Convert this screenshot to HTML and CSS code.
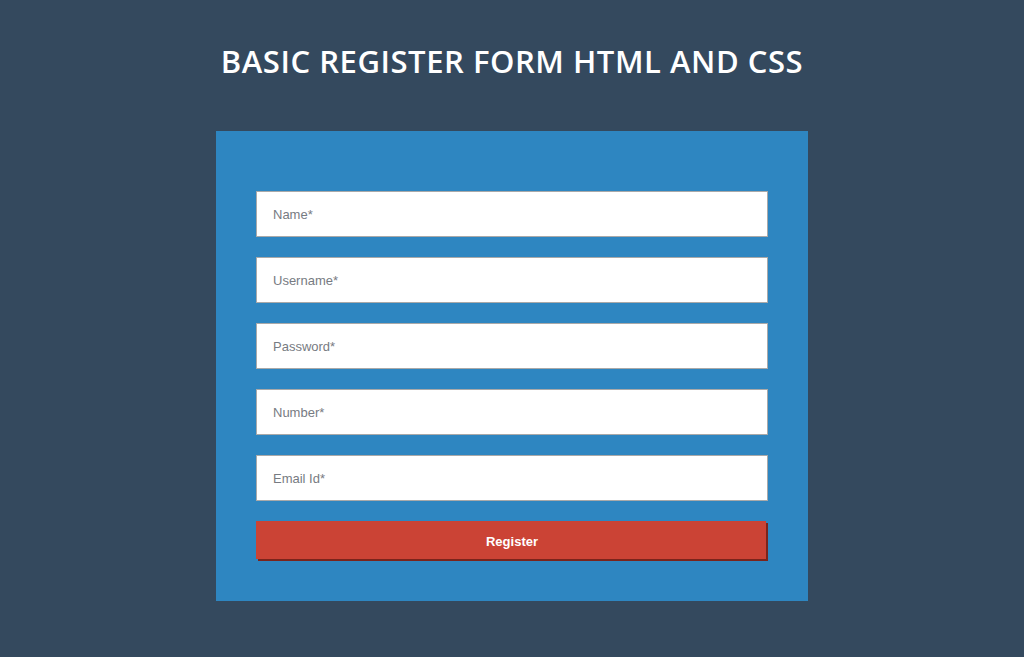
FILE: index.html
```html
<!DOCTYPE html>
<html>
<head>
<meta charset="utf-8">
<link rel="stylesheet" href="styles.css">
</head>
<body>
<h1 class="title">BASIC REGISTER FORM HTML AND CSS</h1>
<form class="panel">
  <input class="field" type="text" placeholder="Name*">
  <input class="field" type="text" placeholder="Username*">
  <input class="field" type="password" placeholder="Password*">
  <input class="field" type="text" placeholder="Number*">
  <input class="field" type="text" placeholder="Email Id*">
  <button class="btn" type="button">Register</button>
</form>
</body>
</html>
```
FILE: styles.css
```css
html, body {
  margin: 0;
  padding: 0;
}
body {
  background: #34495e;
  height: 657px;
  overflow: hidden;
  display: flex;
  flex-direction: column;
  align-items: center;
}
.title {
  margin: 40px 0 0;
  font-family: "Open Sans", "Lato", sans-serif;
  font-weight: 600;
  font-size: 31px;
  letter-spacing: 0.55px;
  line-height: 42px;
  color: #ffffff;
  text-align: center;
}
.panel {
  margin-top: 49px;
  width: 592px;
  box-sizing: border-box;
  background: #2e86c1;
  padding: 60px 40px 40px;
  display: flex;
  flex-direction: column;
  gap: 20px;
}
.field {
  box-sizing: border-box;
  width: 512px;
  height: 46px;
  margin: 0;
  border: 1px solid #a9a9a9;
  background: #ffffff;
  padding: 0 16px;
  font-family: "Liberation Sans", Arial, sans-serif;
  font-size: 13px;
  color: #333;
  outline: none;
}
.field::placeholder {
  color: #777b82;
}
.btn {
  box-sizing: border-box;
  width: 510px;
  height: 38px;
  margin: 0 0 2px;
  border: none;
  background: #cb4335;
  box-shadow: 2px 2px 0 #7b241c;
  color: #ffffff;
  font-family: "Liberation Sans", Arial, sans-serif;
  font-weight: bold;
  font-size: 13px;
  padding: 2px 0 0 2px;
}
```
